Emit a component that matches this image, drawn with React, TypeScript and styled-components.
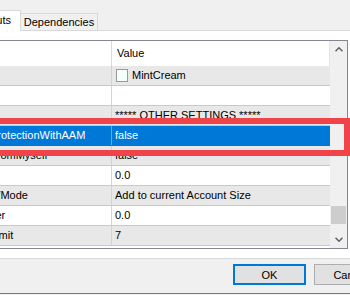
import React from "react";
import styled, { createGlobalStyle } from "styled-components";

const Global = createGlobalStyle`
  *, *::before, *::after { box-sizing: border-box; }
  html, body { margin: 0; padding: 0; background: #f0f0f0; overflow: hidden; }
  body { font-family: "Liberation Sans", Arial, sans-serif; font-size: 11px; color: #000; }
`;

const Window = styled.div`
  position: relative;
  width: 350px;
  height: 295px;
  overflow: hidden;
  background: #f0f0f0;
`;

const Dialog = styled.div`
  display: flex;
  flex-direction: column;
  width: 460px;
  margin-left: -60px;
`;

const TabStrip = styled.div`
  display: flex;
  align-items: flex-end;
  height: 31px;
  border-bottom: 1px solid #d9d9d9;
  padding-left: 34px;
`;

const ActiveTab = styled.div`
  position: relative;
  height: 21px;
  margin-bottom: -1px;
  padding: 0 9px 0 6px;
  background: #fff;
  border: 1px solid #d9d9d9;
  border-bottom: none;
  line-height: 19px;
`;

const Tab = styled.div`
  width: 77px;
  height: 17px;
  background: #f0f0f0;
  border-top: 1px solid #d9d9d9;
  border-right: 1px solid #d9d9d9;
  text-align: center;
  line-height: 16px;
`;

const Page = styled.div`
  background: #fff;
  border-bottom: 1px solid #d9d9d9;
  padding: 9px 52px 9px 10px;
`;

const List = styled.div`
  display: flex;
  height: 209px;
  border: 1px solid #828790;
`;

const Body = styled.div`
  flex: 1;
  display: flex;
  flex-direction: column;
  background: #fff;
`;

const HeaderRow = styled.div`
  display: grid;
  grid-template-columns: 161px 1fr;
  height: 25px;
  line-height: 25px;
  background: #fff;
`;

const HeaderCell = styled.div<{ $last?: boolean }>`
  padding-left: ${(p) => (p.$last ? "5px" : "39px")};
  border-right: 1px solid ${(p) => (p.$last ? "#e5e5e5" : "#d9d9d9")};
`;

const Row = styled.div<{ $tone: "gray" | "white" | "selected" }>`
  display: grid;
  grid-template-columns: 161px 1fr;
  height: 20px;
  line-height: 19px;
  border-bottom: 1px solid ${(p) => (p.$tone === "selected" ? "#0078d7" : "#c9c9c9")};
  background: ${(p) =>
    p.$tone === "selected" ? "#0078d7" : p.$tone === "gray" ? "#e8e8e8" : "#ffffff"};
  color: ${(p) => (p.$tone === "selected" ? "#fff" : "#000")};
  white-space: nowrap;
`;

const NameCell = styled.div<{ $selected?: boolean }>`
  padding-left: 39px;
  overflow: hidden;
  border-right: 1px solid ${(p) => (p.$selected ? "#6aa9e3" : "#d3d3d3")};
`;

const ValueCell = styled.div`
  display: flex;
  align-items: center;
  padding-left: 3px;
  overflow: hidden;
`;

const Swatch = styled.span<{ $color: string }>`
  display: inline-block;
  width: 12px;
  height: 13px;
  margin: 0 4px 0 1px;
  border: 1px solid #9a9a9a;
  background: ${(p) => p.$color};
`;

const Scrollbar = styled.div`
  width: 17px;
  display: flex;
  flex-direction: column;
  background: #f0f0f0;
`;

const ArrowButton = styled.div`
  height: 17px;
  display: flex;
  align-items: center;
  justify-content: center;
`;

const Track = styled.div`
  flex: 1;
  padding-top: 148px;
`;

const Thumb = styled.div`
  height: 18px;
  margin: 0 1px;
  background: #cdcdcd;
`;

const Footer = styled.div`
  display: flex;
  justify-content: flex-end;
  align-items: flex-start;
  gap: 8px;
  height: 35px;
  padding: 5px 13px 0 0;
  border-bottom: 1px solid #7a7a7a;
`;

const Button = styled.div<{ $default?: boolean }>`
  width: 73px;
  height: 21px;
  display: flex;
  align-items: center;
  justify-content: center;
  background: #e1e1e1;
  border: ${(p) => (p.$default ? "2px solid #0078d7" : "1px solid #adadad")};
`;

const Highlight = styled.div`
  position: absolute;
  left: -10px;
  top: 118px;
  width: 360px;
  height: 38px;
  border: 6px solid #f0444a;
  pointer-events: none;
`;

type RowData = {
  name: string;
  value: string;
  tone: "gray" | "white" | "selected";
  swatch?: string;
};

const rows: RowData[] = [
  { name: "", value: "MintCream", tone: "gray", swatch: "#f5fffa" },
  { name: "", value: "", tone: "white" },
  { name: "", value: "***** OTHER SETTINGS *****", tone: "gray" },
  { name: "ProtectionWithAAM", value: "false", tone: "selected" },
  { name: "FromMyself", value: "false", tone: "gray" },
  { name: "", value: "0.0", tone: "white" },
  { name: "WMode", value: "Add to current Account Size", tone: "gray" },
  { name: "Ter", value: "0.0", tone: "white" },
  { name: "Limit", value: "7", tone: "gray" },
];

const Chevron = ({ down }: { down?: boolean }) => (
  <svg width="8" height="5" viewBox="0 0 8 5">
    <polyline
      points={down ? "0.5,0.8 4,4.2 7.5,0.8" : "0.5,4.2 4,0.8 7.5,4.2"}
      fill="none"
      stroke="#606060"
      strokeWidth="1.5"
    />
  </svg>
);

export default function App() {
  return (
    <>
      <Global />
      <Window>
        <Dialog>
          <TabStrip>
            <ActiveTab>Inputs</ActiveTab>
            <Tab>Dependencies</Tab>
          </TabStrip>
          <Page>
            <List>
              <Body>
                <HeaderRow>
                  <HeaderCell />
                  <HeaderCell $last>Value</HeaderCell>
                </HeaderRow>
                {rows.map((r, i) => (
                  <Row key={i} $tone={r.tone}>
                    <NameCell $selected={r.tone === "selected"}>{r.name}</NameCell>
                    <ValueCell>
                      {r.swatch && <Swatch $color={r.swatch} />}
                      {r.value}
                    </ValueCell>
                  </Row>
                ))}
              </Body>
              <Scrollbar>
                <ArrowButton>
                  <Chevron />
                </ArrowButton>
                <Track>
                  <Thumb />
                </Track>
                <ArrowButton>
                  <Chevron down />
                </ArrowButton>
              </Scrollbar>
            </List>
          </Page>
          <Footer>
            <Button $default>OK</Button>
            <Button>Cancel</Button>
          </Footer>
        </Dialog>
        <Highlight />
      </Window>
    </>
  );
}
